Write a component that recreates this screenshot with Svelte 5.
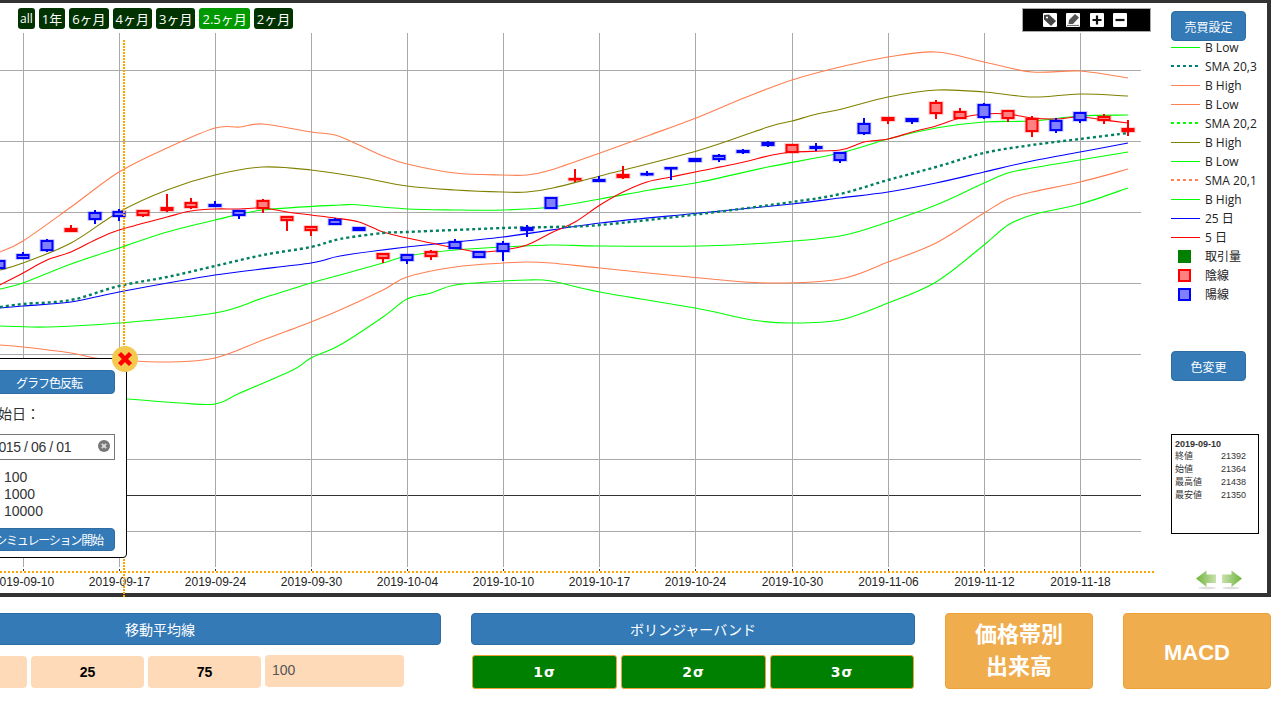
<script>
  const hGrid = [70.5, 141.5, 212.5, 283.5, 354.5, 459.5, 531.5];
  const vGrid = [23.5, 119.5, 215.5, 311.5, 407.5, 503.5, 599.5, 695.5, 792.5, 888.5, 984.5, 1080.5];
  const dates = ['2019-09-10','2019-09-17','2019-09-24','2019-09-30','2019-10-04','2019-10-10','2019-10-17','2019-10-24','2019-10-30','2019-11-06','2019-11-12','2019-11-18'];

  function smooth(str) {
    const p = str.split(' ').map((s) => s.split(',').map(Number));
    let d = `M${p[0][0]} ${p[0][1]}`;
    for (let i = 0; i < p.length - 1; i++) {
      const a = p[Math.max(i - 1, 0)], b = p[i], c = p[i + 1], e = p[Math.min(i + 2, p.length - 1)];
      const k = 6;
      d += ` C${(b[0] + (c[0] - a[0]) / k).toFixed(1)} ${(b[1] + (c[1] - a[1]) / k).toFixed(1)} ${(c[0] - (e[0] - b[0]) / k).toFixed(1)} ${(c[1] - (e[1] - b[1]) / k).toFixed(1)} ${c[0]} ${c[1]}`;
    }
    return d;
  }

  const series = [
    { c: '#ff7f50', p: '0,252 23,241 71,207 119,172 167,148 215,128 240,127 263,124 311,132 335,135 359,145 383,156 407,164 455,173 503,175 527,175 551,170 600,153 650,135 696,118 744,98 792,80 840,67 888,57 936,52 984,62 1032,72 1080,71 1128,78' },
    { c: '#808000', p: '0,270 23,263 71,243 119,212 167,190 215,175 263,167 311,170 359,177 407,186 455,190 503,192 527,192 553,188 600,176 700,150 768,127 792,121 817,114 842,109 888,97 937,90 984,92 1033,97 1080,94 1128,96' },
    { c: '#00ff00', p: '0,289 23,283 71,264 119,248 167,232 215,220 263,210 340,205 359,205 407,209 455,210 503,210 551,207 600,199 650,190 700,182 768,167 840,153 888,139 936,128 984,122 1032,121 1080,116 1128,115' },
    { c: '#00ff00', p: '0,326 47,327 119,323 215,313 263,298 311,283 340,275 383,263 407,256 455,250 503,247 551,245 600,246 700,246 768,243 840,236 888,222 936,205 984,183 1008,173 1032,168 1080,160 1128,152' },
    { c: '#ff7f50', p: '0,345 23,347 71,353 95,358 119,360 168,362 215,358 263,340 311,322 340,310 383,290 407,277 455,267 503,263 527,262 551,263 600,268 700,278 768,283 840,279 888,262 936,243 984,213 1008,199 1032,192 1080,182 1128,169' },
    { c: '#00ff00', p: '0,385 71,396 127,399 180,403 215,404 240,393 293,370 311,358 340,345 383,317 407,299 431,293 455,285 503,281 527,280 551,281 600,292 700,309 752,320 790,323 840,320 888,303 936,282 984,245 1008,225 1032,215 1080,204 1128,188' },
    { c: '#0000ff', p: '0,308 23,306 71,302 119,292 215,275 311,263 340,256 407,247 503,237 600,223 700,213 792,204 840,198 888,192 936,183 984,172 1032,161 1080,152 1128,143' },
    { c: '#ff0000', p: '0,285 23,273 47,260 71,252 95,240 119,230 167,217 191,211 215,209 239,209 263,208 287,212 311,215 335,218 359,222 383,232 407,238 431,243 455,248 479,252 503,250 527,245 551,233 575,222 600,205 623,192 647,182 671,177 700,171 744,162 768,156 792,152 840,150 864,142 888,139 912,132 936,126 960,118 984,114 1008,114 1032,118 1056,119 1080,117 1104,120 1128,123' }
  ];
  const sma = '0,307 23,304 71,300 119,286 167,277 215,266 263,255 311,247 340,239 383,233 407,232 503,228 551,227 600,225 700,214 792,202 840,194 888,180 936,167 984,153 1032,145 1080,139 1128,133';

  // x, colour, top, bottom, wick top, wick bottom
  const candles = [
    [-1,'b',260,269,260,269],[23,'b',254,259,252,259],[47,'b',240,251,239,252],[71,'r',228,232,225,232],
    [95,'b',212,220,210,224],[119,'b',211,217,209,221],[143,'r',210,216,210,217],[167,'r',207,211,194,212],
    [191,'r',202,208,198,209],[215,'b',204,207,201,207],[239,'b',210,216,210,219],[263,'r',200,209,199,213],
    [287,'r',216,221,216,231],[311,'r',226,231,226,236],[335,'b',219,225,218,225],[359,'b',227,231,227,231],
    [383,'r',253,259,253,263],[407,'b',254,261,254,264],[431,'r',251,257,250,260],[455,'b',241,249,239,249],
    [479,'b',251,258,251,258],[503,'b',243,252,241,261],[527,'b',227,231,225,237],[551,'b',197,209,197,209],
    [575,'r',178,180,169,182],[599,'b',179,182,176,182],[623,'r',174,178,166,179],[647,'b',173,175,171,176],
    [671,'b',167,169,167,180],[695,'b',158,162,158,162],[719,'b',155,160,154,162],[743,'b',150,153,149,154],
    [768,'b',142,146,141,147],[792,'r',144,153,144,153],[816,'b',146,149,143,151],[840,'b',152,161,152,163],
    [864,'b',123,134,118,135],[888,'r',117,121,117,124],[912,'b',118,122,118,124],[936,'r',102,114,100,119],
    [960,'r',111,119,108,119],[984,'b',104,118,103,119],[1008,'r',110,119,110,122],[1032,'r',118,132,116,137],
    [1056,'b',120,131,118,133],[1080,'b',112,121,112,123],[1104,'r',116,121,114,124],[1128,'r',128,132,120,136]
  ];
  const col = (k) => (k === 'r' ? '#ff0000' : '#0000ff');
  const fill = (k) => (k === 'r' ? '#ff8080' : '#8080ff');

  const ranges = [
    { t: 'all', narrow: true }, { t: '1年' }, { t: '6ヶ月' }, { t: '4ヶ月' }, { t: '3ヶ月' }, { t: '2.5ヶ月', on: true }, { t: '2ヶ月' }
  ];
  const legend = [
    { t: 'B Low', k: 'lime' }, { t: 'SMA 20,3', k: 'teal dot' }, { t: 'B High', k: 'coral' },
    { t: 'B Low', k: 'coral' }, { t: 'SMA 20,2', k: 'lime dot' }, { t: 'B High', k: 'olive' },
    { t: 'B Low', k: 'lime' }, { t: 'SMA 20,1', k: 'coral dot' }, { t: 'B High', k: 'lime' },
    { t: '25 日', k: 'blue' }, { t: '5 日', k: 'red' }
  ];
  const quotes = [['終値','21392'],['始値','21364'],['最高値','21438'],['最安値','21350']];
</script>

<div class="page">
  <div class="frame">
    <svg class="plot" width="1167" height="590" viewBox="0 3 1167 590">
      <defs>
        <linearGradient id="al" x1="0" x2="1" y1="0" y2="0">
          <stop offset="0" stop-color="#6fb33a" /><stop offset="1" stop-color="#c8e2ac" />
        </linearGradient>
        <linearGradient id="ar" x1="0" x2="1" y1="0" y2="0">
          <stop offset="0" stop-color="#c8e2ac" /><stop offset="1" stop-color="#6fb33a" />
        </linearGradient>
      </defs>
      {#each hGrid as y}
        <line x1="0" x2="1141" y1={y} y2={y} stroke="#aaaaaa" />
      {/each}
      <line x1="0" x2="1141" y1="495.5" y2="495.5" stroke="#333333" />
      {#each vGrid as x, i}
        <line x1={x} x2={x} y1="33" y2="567" stroke="#aaaaaa" />
        <line x1={x} x2={x} y1="569" y2="571" stroke="#333333" />
        <text class="date" x={x} y="586" text-anchor="middle">{dates[i]}</text>
      {/each}
      <line x1="0" x2="1155" y1="572" y2="572" stroke="#ffa500" stroke-width="2" stroke-dasharray="2 2" />
      {#each series as s}
        <path d={smooth(s.p)} fill="none" stroke={s.c} stroke-width="1.1" />
      {/each}
      <path d={smooth(sma)} fill="none" stroke="#008060" stroke-width="2.4" stroke-dasharray="3 3" />
      {#each candles as c}
        <line x1={c[0]} x2={c[0]} y1={c[4]} y2={c[5]} stroke={col(c[1])} stroke-width="2" />
        <rect x={c[0] - 5.5} y={c[2] + 1} width="11" height={Math.max(c[3] - c[2] - 2, 0.5)} fill="none" stroke={col(c[1])} stroke-width="4" stroke-opacity="0.2" />
        <rect x={c[0] - 5.5} y={c[2] + 1} width="11" height={Math.max(c[3] - c[2] - 2, 0.5)} fill={fill(c[1])} stroke={col(c[1])} stroke-width="2" />
      {/each}
      <line x1="124" x2="124" y1="40" y2="597" stroke="#ffa500" stroke-width="2" stroke-dasharray="2 1" />
    </svg>

    <div class="chart-top">
      <div class="ranges">
        {#each ranges as r}
          <button class="range" class:on={r.on} class:narrow={r.narrow}>{r.t}</button>
        {/each}
      </div>
      <div class="tools">
        <svg width="14" height="14" viewBox="0 0 14 14"><rect width="14" height="14" fill="#fff" rx="1" /><path d="M1 2 L6 1.5 L13 8 L8 13 L1 6.5 Z" fill="#444" /><circle cx="4" cy="4.5" r="1.1" fill="#fff" /></svg>
        <svg width="14" height="14" viewBox="0 0 14 14"><rect width="14" height="14" fill="#fff" rx="1" /><path d="M9 1 L13 4.5 L7 11 L2.5 11 L3 7 Z" fill="#555" /><path d="M1 12.5 H13" stroke="#777" stroke-width="1.2" /></svg>
        <svg width="14" height="14" viewBox="0 0 14 14"><rect width="14" height="14" fill="#fff" rx="1" /><path d="M2.5 7 H11.5 M7 2.5 V11.5" stroke="#111" stroke-width="2.2" /></svg>
        <svg width="14" height="14" viewBox="0 0 14 14"><rect width="14" height="14" fill="#fff" rx="1" /><path d="M2.5 7 H11.5" stroke="#111" stroke-width="2.2" /></svg>
      </div>
    </div>

    <aside class="side">
      <button class="btn side-btn">売買設定</button>
      <ul class="legend">
        {#each legend as l}
          <li><span class="mark {l.k}"></span>{l.t}</li>
        {/each}
        <li><span class="swatch vol"></span>取引量</li>
        <li><span class="swatch down"></span>陰線</li>
        <li><span class="swatch up"></span>陽線</li>
      </ul>
      <button class="btn side-btn color-btn">色変更</button>
      <div class="info">
        <strong>2019-09-10</strong>
        {#each quotes as q}
          <div class="q"><span>{q[0]}</span><span>{q[1]}</span></div>
        {/each}
      </div>
      <svg class="arrows" width="46" height="20" viewBox="0 0 46 20">
        <ellipse cx="11" cy="18" rx="9" ry="1.2" fill="#ddd" />
        <ellipse cx="35" cy="18" rx="9" ry="1.2" fill="#ddd" />
        <path d="M0 8.5 L10.500 0.500 V4.500 H20 V13 H10.500 V17 Z" fill="url(#al)" />
        <path d="M46 8.500 L35.500 0.500 V4.500 H26 V13 H35.500 V17 Z" fill="url(#ar)" />
      </svg>
    </aside>

    <div class="popup">
      <button class="btn pop-a">グラフ色反転</button>
      <div class="pop-label">開始日：</div>
      <div class="pop-input">2015 / 06 / 01
        <svg class="clear" width="12" height="12" viewBox="0 0 12 12"><circle cx="6" cy="6" r="6" fill="#777" /><path d="M3.800 3.800 L8.200 8.200 M8.200 3.800 L3.800 8.200" stroke="#ddd" stroke-width="1.800" /></svg>
      </div>
      <div class="pop-radios"><div>100</div><div>1000</div><div>10000</div></div>
      <button class="btn pop-b">シミュレーション開始</button>
    </div>
    <div class="close">
      <svg width="26" height="26" viewBox="0 0 26 26"><path d="M7.500 7.500 L18.500 18.500 M18.500 7.500 L7.500 18.500" stroke="#ff0000" stroke-width="4.500" /></svg>
    </div>
  </div>

  <div class="controls">
    <div class="ma">
      <button class="btn head">移動平均線</button>
      <div class="ma-row">
        <button class="peach">5</button>
        <button class="peach">25</button>
        <button class="peach">75</button>
        <div class="peach-input">100</div>
      </div>
    </div>
    <div class="bb">
      <button class="btn head">ボリンジャーバンド</button>
      <div class="bb-row">
        <button class="sig">1σ</button>
        <button class="sig">2σ</button>
        <button class="sig">3σ</button>
      </div>
    </div>
    <button class="big"><span>価格帯別</span><span>出来高</span></button>
    <button class="big macd">MACD</button>
  </div>
</div>

<style>
  :global(body) { margin: 0; background: #fff; }
  .page {
    width: 1286px;
    height: 708px;
    overflow: hidden;
    font-family: "Liberation Sans", "Noto Sans CJK JP", sans-serif;
    color: #333;
  }
  button { font-family: inherit; padding: 0; cursor: pointer; }
  .frame {
    position: relative;
    box-sizing: border-box;
    width: 1271px;
    height: 597px;
    border-top: 3px solid #333;
    border-right: 4px solid #333;
    border-bottom: 4px solid #333;
    display: flex;
    background: #fff;
  }
  .plot { position: absolute; left: 0; top: 0; overflow: visible; }
  .date { font-size: 12px; fill: #222; }
  .chart-top {
    position: relative;
    width: 1171px;
    box-sizing: border-box;
    padding: 5px 20px 0 18px;
    display: flex;
    align-items: flex-start;
    justify-content: space-between;
  }
  .ranges { display: flex; gap: 4px; }
  .range {
    height: 21px;
    padding: 0 3px;
    border: 0;
    border-radius: 3px;
    background: #003300;
    color: #fff;
    font-size: 13px;
    font-family: "Open Sans", "Noto Sans CJK JP", sans-serif;
  }
  .range.narrow { padding: 0 2px; font-size: 12px; }
  .range.on { background: #009900; }
  .tools {
    box-sizing: border-box;
    width: 129px;
    height: 24px;
    background: #000;
    border: 1px solid #aaa;
    display: flex;
    align-items: center;
    justify-content: center;
    gap: 9.500px;
    padding-right: 3px;
  }
  .btn {
    background: #337ab7;
    border: 1px solid #2e6da4;
    border-radius: 4px;
    color: #fff;
    font-size: 12px;
  }
  .side {
    position: relative;
    width: 96px;
    flex: none;
    padding-top: 8px;
    font-family: "Open Sans", "Noto Sans CJK JP", sans-serif;
  }
  .side-btn { display: block; width: 75px; height: 30px; font-family: "Liberation Sans", "Noto Sans CJK JP", sans-serif; }
  .legend { list-style: none; margin: -3.500px 0 0; padding: 0; }
  .legend li {
    height: 19px;
    display: flex;
    align-items: center;
    font-size: 12px;
    color: #222;
    white-space: nowrap;
  }
  .mark { width: 29px; margin-right: 5px; flex: none; border-top: 1px solid; }
  .mark.lime { color: #00ff00; }
  .mark.coral { color: #ff7f50; }
  .mark.olive { color: #808000; }
  .mark.blue { color: #0000ff; }
  .mark.red { color: #ff0000; }
  .mark.teal { color: #008080; }
  .mark.dot {
    border-top: 0;
    height: 2px;
    background: repeating-linear-gradient(90deg, currentColor 0 3px, transparent 3px 6px);
  }
  .swatch { box-sizing: border-box; width: 13px; height: 13px; margin: 0 14px 0 7px; flex: none; }
  .swatch.vol { background: #008000; }
  .swatch.down { background: #ff8080; border: 2px solid #ff0000; }
  .swatch.up { background: #8080ff; border: 2px solid #0000ff; }
  .color-btn { margin-top: 47.500px; }
  .info {
    box-sizing: border-box;
    width: 88px;
    height: 100px;
    margin-top: 53px;
    border: 1px solid #000;
    padding: 3px 3px;
    font-family: "Liberation Sans", "Noto Sans CJK JP", sans-serif;
    font-size: 9px;
    color: #333;
  }
  .info strong { display: block; line-height: 12px; }
  .q { display: flex; justify-content: space-between; height: 13px; line-height: 13px; padding-right: 9px; }
  .arrows { display: block; margin: 36px 0 0 25px; }

  .popup {
    position: absolute;
    left: -40px;
    top: 355px;
    box-sizing: border-box;
    width: 167px;
    height: 200px;
    background: #fff;
    border: 1px solid #000;
    border-radius: 0 0 4px 0;
    padding: 11px 11px 0 22px;
    font-size: 14px;
  }
  .pop-a { display: block; width: 132px; height: 24px; margin-left: auto; letter-spacing: -1px; }
  .pop-b { display: block; width: 132px; height: 23px; margin-top: 8px; letter-spacing: -1.2px; white-space: nowrap; }
  .pop-label { margin: 10px 0 0 1px; line-height: 20px; white-space: nowrap; }
  .pop-input {
    position: relative;
    box-sizing: border-box;
    width: 130px;
    height: 26px;
    margin: 10px 0 0 2px;
    padding-left: 5px;
    border: 1px solid #777;
    line-height: 24px;
    letter-spacing: -0.4px;
    white-space: nowrap;
  }
  .clear { position: absolute; right: 4px; top: 5px; }
  .pop-radios { margin: 9px 0 0 21px; line-height: 17px; }
  .close {
    position: absolute;
    left: 112px;
    top: 343px;
    width: 26px;
    height: 26px;
    border-radius: 50%;
    background: #f4c94f;
  }

  .controls {
    display: flex;
    gap: 30px;
    margin: 16px 0 0 -121px;
    width: 1392px;
  }
  .head { display: block; width: 100%; height: 32px; font-size: 14px; }
  .ma { width: 562px; flex: none; }
  .bb { width: 444px; flex: none; }
  .ma-row { display: flex; gap: 4px; margin: 10px 0 0 35px; align-items: flex-start; }
  .peach {
    width: 113px;
    height: 32px;
    margin-top: 1px;
    background: #ffdab9;
    border: 0;
    border-radius: 4px;
    font-weight: bold;
    font-size: 14px;
    color: #000;
  }
  .peach-input {
    box-sizing: border-box;
    width: 139px;
    height: 32px;
    padding-left: 7px;
    background: #ffdab9;
    border-radius: 4px;
    font-size: 14px;
    line-height: 31px;
    color: #555;
  }
  .bb-row { display: flex; gap: 4px; margin: 10px 0 0 1px; }
  .sig {
    width: 145px;
    height: 34px;
    background: #008000;
    border: 1px solid #eea236;
    border-radius: 3px;
    color: #fff;
    font-family: "DejaVu Sans", sans-serif;
    font-weight: bold;
    font-size: 14px;
    letter-spacing: 1px;
  }
  .sig:last-child { width: 144px; }
  .big {
    width: 148px;
    height: 76px;
    flex: none;
    background: #f0ad4e;
    border: 1px solid #eea236;
    border-radius: 4px;
    color: #fff;
    font-weight: bold;
    font-size: 22px;
    line-height: 32px;
    display: flex;
    flex-direction: column;
    align-items: center;
    justify-content: center;
  }
  .macd { font-size: 22px; padding-top: 3px; }
</style>
